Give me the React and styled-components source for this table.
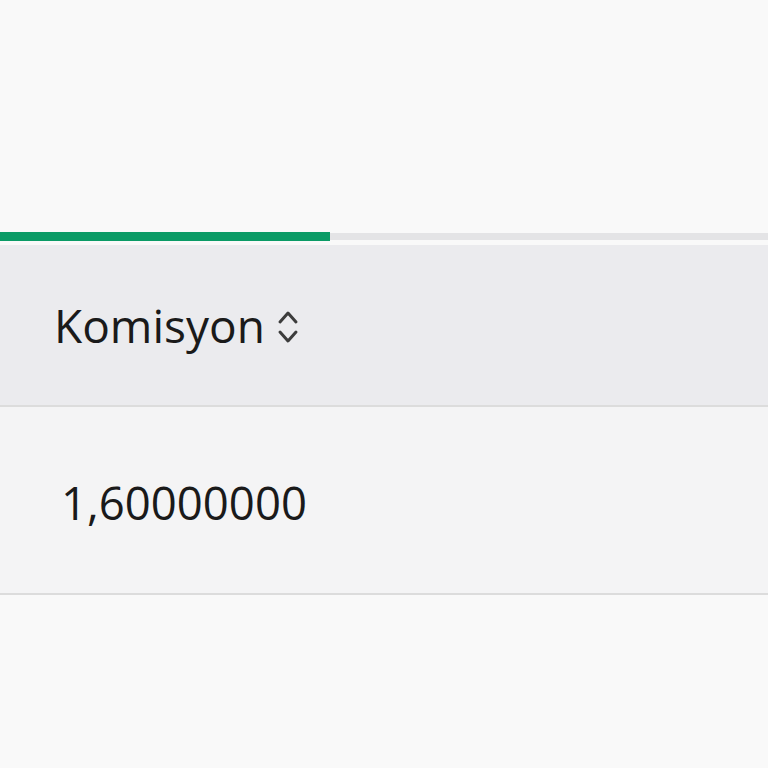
import styled, { createGlobalStyle } from "styled-components";

const GlobalStyle = createGlobalStyle`
    html, body {
        margin: 0;
        padding: 0;
        background: #f9f9f9;
        font-family: "Open Sans", "Noto Sans", sans-serif;
    }
`

function SortIcon() {
    return (
        <svg width="22" height="38" viewBox="0 0 22 38" fill="none" stroke="#3c3c3c" strokeWidth="3" strokeLinecap="round" strokeLinejoin="round">
            <polyline points="3,14 11,5 19,14" />
            <polyline points="3,24 11,33 19,24" />
        </svg>
    )
}

function App() {
    return (
        <Page>
            <GlobalStyle />
            <Top />
            <Progress>
                <ProgressFill style={{ width: `${(330 / 768) * 100}%` }} />
            </Progress>
            <Table>
                <thead>
                    <HeadRow>
                        <Th>
                            <HeadLabel>
                                Komisyon
                                <SortIcon />
                            </HeadLabel>
                        </Th>
                    </HeadRow>
                </thead>
                <tbody>
                    <BodyRow>
                        <Td>1,60000000</Td>
                    </BodyRow>
                </tbody>
            </Table>
        </Page>
    )
}

const Page = styled.div`
    width: 768px;
    height: 768px;
    overflow: hidden;
    background: #f9f9f9;
`

const Top = styled.div`
    height: 232px;
`

const Progress = styled.div`
    position: relative;
    height: 9px;
    display: flex;
    align-items: center;
    &::before{
        content: "";
        position: absolute;
        left: 0;
        right: 0;
        top: 1px;
        height: 7px;
        background: #e4e4e6;
    }
`

const ProgressFill = styled.div`
    position: relative;
    height: 9px;
    background: #0b9b66;
`

const Table = styled.table`
    width: 100%;
    border-collapse: collapse;
    margin-top: 4px;
`

const HeadRow = styled.tr`
    background: #ebebee;
    border-bottom: 2px solid #dcdcdc;
`

const Th = styled.th`
    height: 160px;
    padding: 0 0 0 54px;
    text-align: left;
    font-weight: 400;
    font-size: 46px;
    color: #1a1a1a;
`

const HeadLabel = styled.span`
    display: inline-flex;
    align-items: center;
    gap: 12px;
    svg{
        margin-top: 4px;
    }
`

const BodyRow = styled.tr`
    background: #f4f4f5;
    border-bottom: 2px solid #dcdcdc;
`

const Td = styled.td`
    height: 182px;
    padding: 4px 0 0 61px;
    font-size: 45.5px;
    color: #1a1a1a;
`

export default App
